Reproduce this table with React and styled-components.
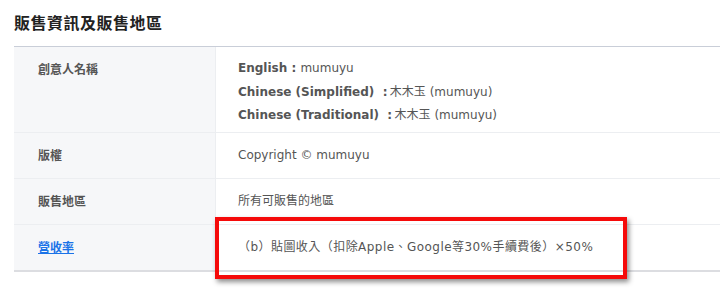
import React from 'react'
import styled, { createGlobalStyle } from 'styled-components'

const GlobalStyle = createGlobalStyle`
  html, body {
    margin: 0;
    padding: 0;
    background: #fff;
  }
  body {
    font-family: "DejaVu Sans", "Noto Sans CJK TC", sans-serif;
    color: #555;
  }
`

const rows = [
  {
    label: '創意人名稱',
    lines: [
      ['English', '\u00a0:\u00a0', 'mumuyu'],
      ['Chinese (Simplified)', '\u00a0\u00a0:\u2009', '木木玉 (mumuyu)'],
      ['Chinese (Traditional)', '\u00a0\u00a0:\u2009', '木木玉 (mumuyu)'],
    ],
  },
  { label: '版權', text: 'Copyright © mumuyu' },
  { label: '販售地區', text: '所有可販售的地區' },
  {
    label: '營收率',
    link: true,
    text: '（b）貼圖收入（扣除Apple、Google等30%手續費後）×50%',
    marked: true,
  },
]

export default function App() {
  return (
    <Page>
      <GlobalStyle />
      <Title>販售資訊及販售地區</Title>
      <Table>
        {rows.map(row => (
          <Row key={row.label} $tall={!!row.lines}>
            <Label>
              {row.link ? <LabelLink href="#">{row.label}</LabelLink> : row.label}
            </Label>
            <Value $wide={row.marked}>
              {row.lines
                ? row.lines.map(([k, sep, v]) => (
                    <Line key={k}>
                      <Key>{k}{sep}</Key>
                      {v}
                    </Line>
                  ))
                : row.text}
              {row.marked && <Highlight />}
            </Value>
          </Row>
        ))}
      </Table>
    </Page>
  )
}

const Page = styled.div`
  padding: 0 0 25px 14px;
  width: 706px;
  overflow: hidden;
`
const Title = styled.h2`
  margin: 0;
  height: 46px;
  line-height: 44px;
  font-size: 16px;
  font-weight: bold;
  color: #222;
  letter-spacing: 0.5px;
  font-family: "Noto Sans CJK TC", sans-serif;
`
const Table = styled.div`
  border-top: 1px solid #c9ced8;
  border-bottom: 2px solid #dcdde1;
  display: flex;
  flex-direction: column;
`
const Row = styled.div`
  display: grid;
  grid-template-columns: 202px 1fr;
  min-height: ${({ $tall }) => ($tall ? '85px' : '45px')};
  & + & {
    border-top: 1px solid #eceef1;
  }
`
const Label = styled.div`
  background: #f6f7f9;
  border-right: 1px solid #eceef1;
  padding: 13px 0 0 24px;
  font-size: 12px;
  font-weight: bold;
  color: #555;
  font-family: "Noto Sans CJK TC", sans-serif;
`
const LabelLink = styled.a`
  color: #1a73e8;
  text-decoration: underline;
`
const Value = styled.div`
  position: relative;
  padding: 12px 0 0 22px;
  font-size: 12px;
  line-height: 20px;
  color: #555;
  letter-spacing: ${({ $wide }) => ($wide ? '0.45px' : '0')};
`
const Line = styled.div`
  line-height: 23.5px;
  &:first-child {
    margin-top: -2px;
  }
`
const Key = styled.span`
  font-weight: bold;
`
const Highlight = styled.div`
  position: absolute;
  left: -1px;
  top: -8px;
  box-sizing: border-box;
  width: 412px;
  height: 62px;
  border: 4px solid #f50a0a;
  box-shadow: 2px 3px 5px rgba(0, 0, 0, 0.45);
  pointer-events: none;
`
